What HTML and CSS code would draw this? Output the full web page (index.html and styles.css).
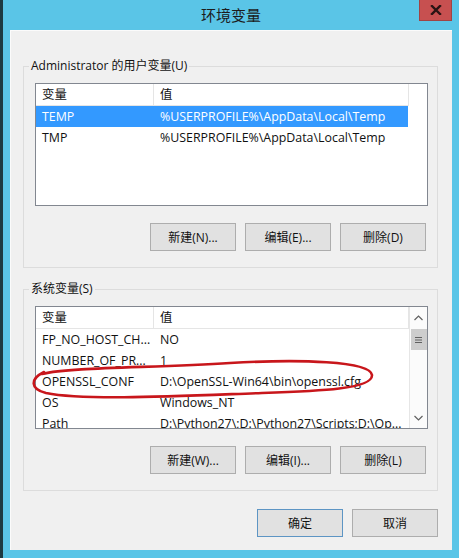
FILE: index.html
```html
<!DOCTYPE html>
<html lang="zh-CN">
<head>
<meta charset="utf-8">
<title>环境变量</title>
<link rel="stylesheet" href="styles.css">
</head>
<body>
<div class="window">
  <div class="titlebar">
    <div class="title-spacer"></div>
    <div class="title">环境变量</div>
    <div class="close">
      <svg width="12" height="10" viewBox="0 0 12 10"><path d="M2 1 L10 9 M10 1 L2 9" stroke="#2a1414" stroke-width="2.4" stroke-linecap="square"/></svg>
    </div>
  </div>
  <div class="client">
    <fieldset class="group">
      <legend>Administrator 的用户变量(U)</legend>
      <div class="list">
        <div class="list-main">
          <div class="list-head"><div class="c1">变量</div><div class="c2">值</div></div>
          <div class="row selected"><div class="c1">TEMP</div><div class="c2">%USERPROFILE%\AppData\Local\Temp</div></div>
          <div class="row"><div class="c1">TMP</div><div class="c2">%USERPROFILE%\AppData\Local\Temp</div></div>
        </div>
      </div>
      <div class="btn-row">
        <button class="btn">新建(N)...</button>
        <button class="btn">编辑(E)...</button>
        <button class="btn">删除(D)</button>
      </div>
    </fieldset>

    <fieldset class="group group-sys">
      <legend>系统变量(S)</legend>
      <div class="list">
        <div class="list-main">
          <div class="list-head"><div class="c1">变量</div><div class="c2">值</div></div>
          <div class="row"><div class="c1">FP_NO_HOST_CH...</div><div class="c2">NO</div></div>
          <div class="row"><div class="c1">NUMBER_OF_PR...</div><div class="c2">1</div></div>
          <div class="row"><div class="c1">OPENSSL_CONF</div><div class="c2">D:\OpenSSL-Win64\bin\openssl.cfg</div></div>
          <div class="row"><div class="c1">OS</div><div class="c2">Windows_NT</div></div>
          <div class="row"><div class="c1">Path</div><div class="c2">D:\Python27\;D:\Python27\Scripts;D:\Op...</div></div>
        </div>
        <div class="scrollbar">
          <div class="sb-arrow">
            <svg width="9" height="6" viewBox="0 0 9 6"><path d="M0.5 5 L4.5 1 L8.5 5" fill="none" stroke="#606060" stroke-width="1.2"/></svg>
          </div>
          <div class="sb-thumb">
            <svg width="7" height="6" viewBox="0 0 7 6"><path d="M0 0.5 H7 M0 3 H7 M0 5.5 H7" stroke="#606060" stroke-width="1"/></svg>
          </div>
          <div class="sb-track"></div>
          <div class="sb-arrow">
            <svg width="9" height="6" viewBox="0 0 9 6"><path d="M0.5 1 L4.5 5 L8.5 1" fill="none" stroke="#606060" stroke-width="1.2"/></svg>
          </div>
        </div>
      </div>
      <div class="btn-row">
        <button class="btn">新建(W)...</button>
        <button class="btn">编辑(I)...</button>
        <button class="btn">删除(L)</button>
      </div>
    </fieldset>

    <div class="dialog-btns">
      <button class="btn btn-default">确定</button>
      <button class="btn">取消</button>
    </div>
  </div>
</div>
<svg class="annotation" width="459" height="558" viewBox="0 0 459 558">
  <path d="M42 374 C 70 367, 150 368, 230 363 C 300 359, 370 361, 372 375 C 373 389, 320 391, 262 393 C 180 396, 85 401, 46 393 C 30 389, 30 379, 44 372" fill="none" stroke="#c8161b" stroke-width="2.6" stroke-linecap="round"/>
</svg>
</body>
</html>
```

FILE: styles.css
```css
* { box-sizing: border-box; }

html, body {
  margin: 0;
  padding: 0;
}

body {
  width: 459px;
  height: 558px;
  background: #1d3a42;
  overflow: hidden;
  font-family: "Open Sans", "Noto Sans CJK SC", sans-serif;
  font-size: 12px;
  color: #111;
}

.window {
  margin-left: 3px;
  width: 456px;
  height: 558px;
  background: #5ac5e7;
  padding: 0 7px 8px 7px;
  display: flex;
  flex-direction: column;
}

.titlebar {
  height: 30px;
  display: flex;
  align-items: flex-start;
  margin: 0 -7px;
}

.title-spacer {
  width: 40px;
  flex: none;
}

.title {
  flex: 1;
  text-align: center;
  font-family: "Noto Sans CJK SC", sans-serif;
  font-size: 15px;
  line-height: 30px;
  color: #1c1c1c;
}

.close {
  width: 33px;
  height: 21px;
  margin-right: 7px;
  flex: none;
  background: #c75050;
  border: 1px solid #a04444;
  border-top: none;
  display: flex;
  align-items: center;
  justify-content: center;
}

.client {
  flex: 1;
  background: #f0f0f0;
  border-left: 1px solid #fbfbfb;
  border-top: 1px solid #fbfbfb;
  padding: 27px 14px 0 12px;
  display: flex;
  flex-direction: column;
}

.group {
  margin: 0;
  padding: 0 9px 16px 11px;
  border: 1px solid #dcdcdc;
  min-width: 0;
}

.group legend {
  padding: 0 2px;
  margin-left: -6px;
  line-height: 16px;
  font-size: 12px;
}

.group-sys {
  margin-top: 13px;
  padding-bottom: 16px;
}

.list {
  margin-top: 9px;
  height: 123px;
  border: 1px solid #828790;
  background: #fff;
  display: flex;
  overflow: hidden;
  font-size: 12.4px;
}

.list-main {
  flex: 1;
  min-width: 0;
}

.list-head {
  display: flex;
  height: 22px;
  border-bottom: 1px solid #e5e5e5;
  width: 373px;
}

.list-head .c1 {
  border-right: 1px solid #e5e5e5;
}

.list-head .c2 {
  border-right: 1px solid #e5e5e5;
}

.c1, .c2 {
  white-space: nowrap;
  overflow: hidden;
  line-height: 21px;
  padding-left: 6px;
}

.c1 { width: 118px; flex: none; }
.c2 { width: 255px; flex: none; }

.row {
  display: flex;
  height: 21px;
  width: 372px;
}

.row.selected {
  background: #3399ff;
  color: #fff;
}

.scrollbar {
  width: 18px;
  flex: none;
  background: #fbfbfb;
  border-left: 1px solid #e6e6e6;
  display: flex;
  flex-direction: column;
  align-items: center;
}

.sb-arrow {
  height: 21px;
  width: 16px;
  display: flex;
  align-items: center;
  justify-content: center;
}

.sb-thumb {
  margin-top: 1px;
  width: 16px;
  height: 21px;
  background: #cdcdcd;
  display: flex;
  align-items: center;
  justify-content: center;
}

.sb-track {
  flex: 1;
}

.btn-row {
  margin-top: 17px;
  display: flex;
  justify-content: flex-end;
  gap: 9px;
  padding-right: 2px;
}

.btn {
  width: 86px;
  height: 28px;
  margin: 0;
  padding: 0;
  background: #e1e1e1;
  border: 1px solid #adadad;
  font-family: "Open Sans", "Noto Sans CJK SC", sans-serif;
  font-size: 12px;
  color: #111;
}

.btn-default {
  border-color: #5d95c4;
}

.dialog-btns {
  margin-top: 18px;
  display: flex;
  justify-content: flex-end;
  gap: 9px;
}

.annotation {
  position: absolute;
  left: 0;
  top: 0;
  pointer-events: none;
}
```
